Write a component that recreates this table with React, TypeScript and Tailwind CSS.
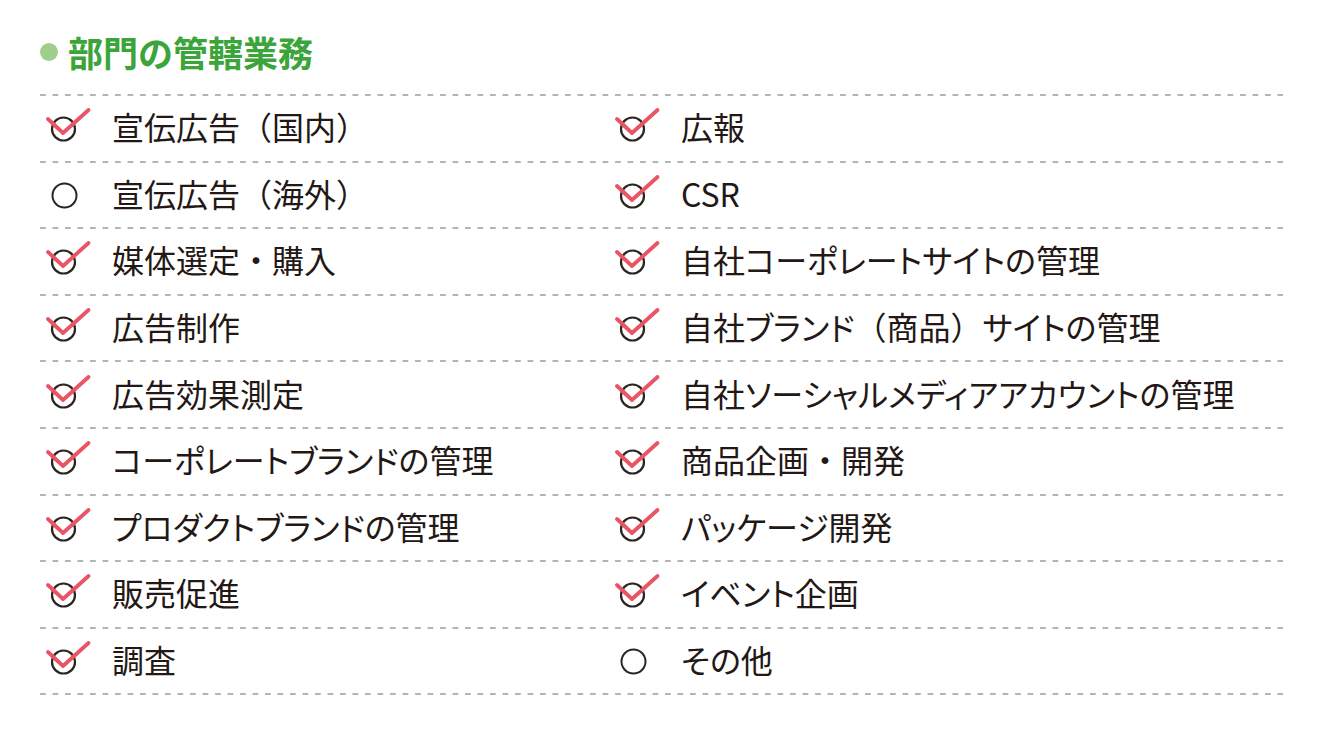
import React from 'react';

type Item = { label: string; checked: boolean };

const rows: [Item, Item][] = [
    [{ label: '宣伝広告（国内）', checked: true }, { label: '広報', checked: true }],
    [{ label: '宣伝広告（海外）', checked: false }, { label: 'CSR', checked: true }],
    [{ label: '媒体選定・購入', checked: true }, { label: '自社コーポレートサイトの管理', checked: true }],
    [{ label: '広告制作', checked: true }, { label: '自社ブランド（商品）サイトの管理', checked: true }],
    [{ label: '広告効果測定', checked: true }, { label: '自社ソーシャルメディアアカウントの管理', checked: true }],
    [{ label: 'コーポレートブランドの管理', checked: true }, { label: '商品企画・開発', checked: true }],
    [{ label: 'プロダクトブランドの管理', checked: true }, { label: 'パッケージ開発', checked: true }],
    [{ label: '販売促進', checked: true }, { label: 'イベント企画', checked: true }],
    [{ label: '調査', checked: true }, { label: 'その他', checked: false }],
];

const DashedLine = () => (
    <div className="h-[2px] w-full bg-[linear-gradient(to_right,#b4b4b4_6px,transparent_6px)] bg-[length:12.5px_2px] bg-repeat-x" />
);

const Mark: React.FC<{ checked: boolean }> = ({ checked }) => (
    <svg width="46" height="40" viewBox="0 0 46 40" className="shrink-0">
        {checked ? (
            <>
                <circle cx="17.5" cy="21" r="11.5" fill="none" stroke="#2b2522" strokeWidth="2.2" />
                <polyline points="2,11 17,25 42.5,2" fill="none" stroke="#ea5565" strokeWidth="3.8" strokeLinecap="round" strokeLinejoin="round" />
            </>
        ) : (
            <circle cx="18.5" cy="20.5" r="12" fill="none" stroke="#2b2522" strokeWidth="2" />
        )}
    </svg>
);

// kana are set proportionally, but brackets and the middle dot keep full width
const Label: React.FC<{ text: string }> = ({ text }) => (
    <>
        {text.split(/([（）・])/).filter(Boolean).map((part, i) =>
            /^[（）・]$/.test(part) ? (
                <span key={i} className="[font-feature-settings:normal]">{part}</span>
            ) : (
                <span key={i}>{part}</span>
            )
        )}
    </>
);

const Cell: React.FC<{ item: Item; wide?: boolean }> = ({ item, wide }) => (
    <div className={`flex items-center pl-[6px] ${wide ? 'w-[569px]' : 'flex-1'}`}>
        <Mark checked={item.checked} />
        <span className="ml-[20px] pb-[4px] text-[32px] leading-none text-[#231815] [font-feature-settings:'palt']">
            <Label text={item.label} />
        </span>
    </div>
);

export default function App() {
    return (
        <div className="min-h-[735px] w-[1330px] bg-white font-['Noto_Sans_CJK_JP','Noto_Sans',sans-serif]">
            <div className="w-[1283px] pl-[40px] pt-[33px]">
                <h2 className="flex items-center">
                    <span className="h-[18px] w-[18px] rounded-full bg-[#9fcf8a]" />
                    <span className="ml-[10px] text-[35px] font-bold leading-[38px] text-[#3ba43a]">部門の管轄業務</span>
                </h2>
                <div className="mt-[23px]">
                    <DashedLine />
                    {rows.map(([left, right], i) => (
                        <div key={i}>
                            <div className="flex h-[64.6px] items-center">
                                <Cell item={left} wide />
                                <Cell item={right} />
                            </div>
                            <DashedLine />
                        </div>
                    ))}
                </div>
            </div>
        </div>
    );
}
